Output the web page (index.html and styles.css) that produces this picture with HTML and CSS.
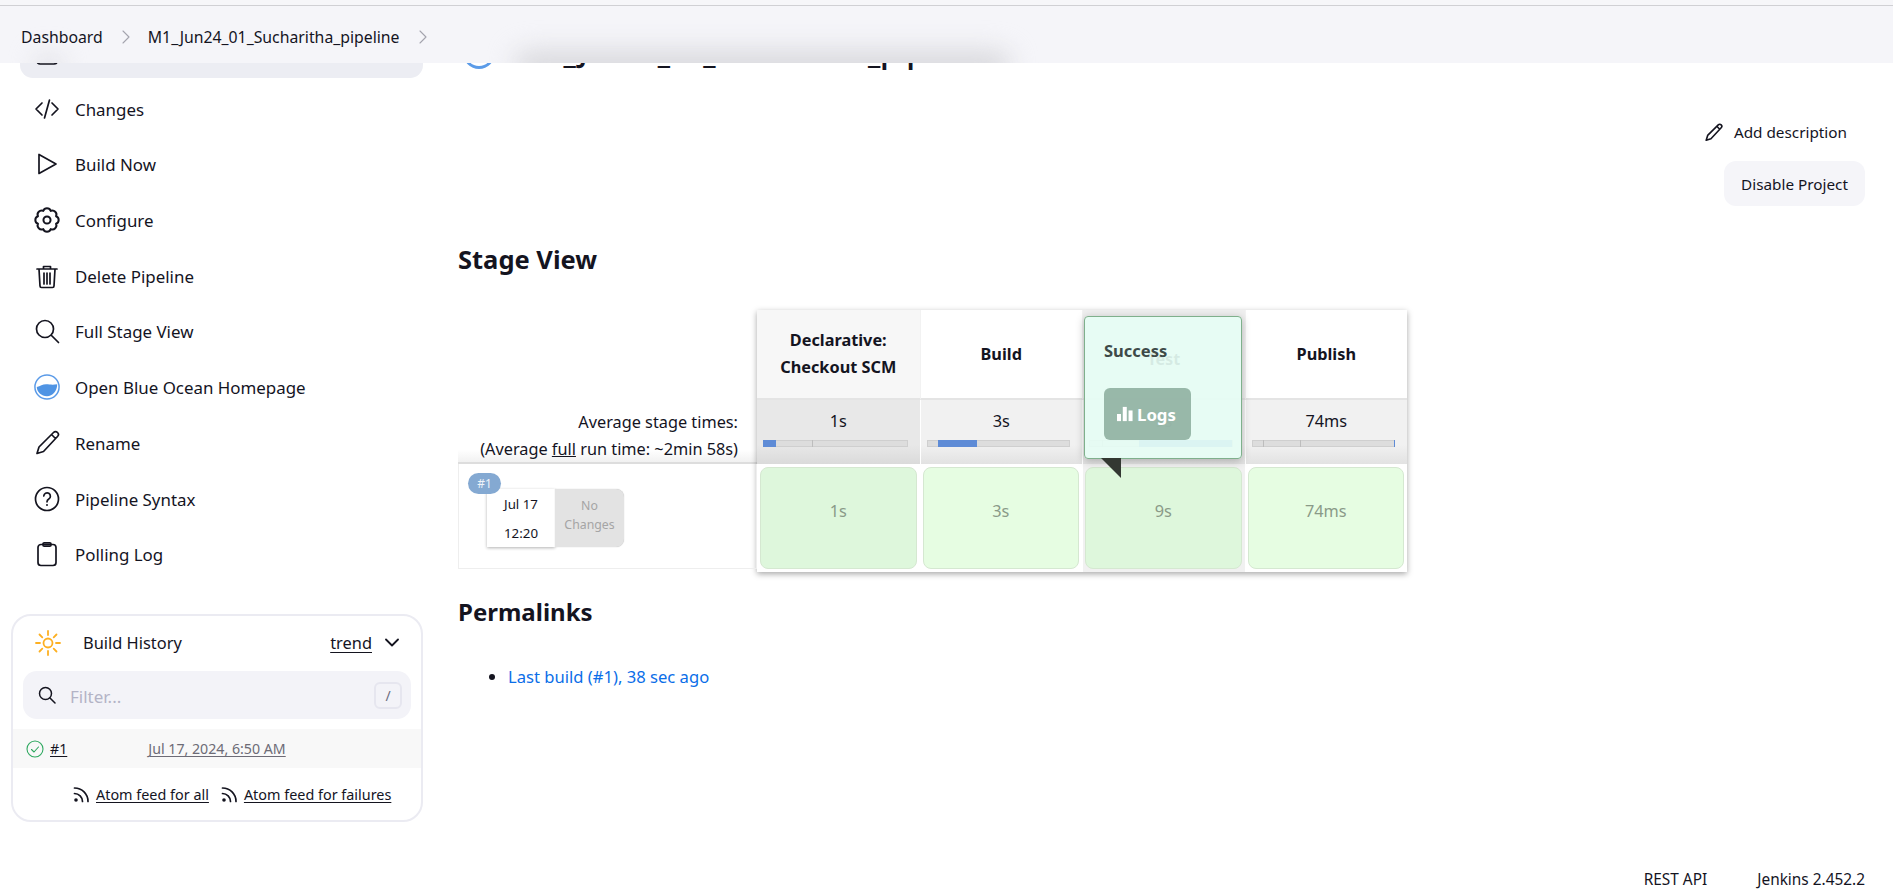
FILE: index.html
```html
<!DOCTYPE html>
<html lang="en">
  <head>
    <meta charset="UTF-8" />
    <title>M1_Jun24_01_Sucharitha_pipeline - Jenkins</title>
    <link rel="stylesheet" href="styles.css">
  </head>
  <body>
    <header class="topbar">
      <i class="smudge smudge-title"></i>
      <i class="smudge smudge-status"></i>
      <a class="crumb">Dashboard</a>
      <svg class="crumb-sep" viewBox="0 0 10 16"><path d="M2 2l6 6-6 6"/></svg>
      <a class="crumb">M1_Jun24_01_Sucharitha_pipeline</a>
      <svg class="crumb-sep" viewBox="0 0 10 16"><path d="M2 2l6 6-6 6"/></svg>
    </header>

    <div class="page">
      <aside class="sidebar">
        <ul class="tasks">
          <li class="task task-active">
            <svg class="icon" viewBox="0 0 26 26"><rect x="3" y="2" width="20" height="22" rx="3"/><path d="M8 9h10M8 14h10M8 19h6"/></svg>
            <span>Status</span>
          </li>
          <li class="task">
            <svg class="icon" viewBox="0 0 26 26"><path d="M8 7l-6 6 6 6M18 7l6 6-6 6M15.500 4l-5 18"/></svg>
            <span>Changes</span>
          </li>
          <li class="task">
            <svg class="icon" viewBox="0 0 26 26"><path d="M5 3.500v19l17-9.500z"/></svg>
            <span>Build Now</span>
          </li>
          <li class="task">
            <svg class="icon" viewBox="1 1 22 22"><path d="M19.670 8.820A3.400 3.400 0 0 1 19.670 15.180A3.400 3.400 0 0 1 15.180 19.670A3.400 3.400 0 0 1 8.820 19.670A3.400 3.400 0 0 1 4.330 15.180A3.400 3.400 0 0 1 4.330 8.820A3.400 3.400 0 0 1 8.820 4.330A3.400 3.400 0 0 1 15.180 4.330A3.400 3.400 0 0 1 19.670 8.820z"/><circle cx="12" cy="12" r="3"/></svg>
            <span>Configure</span>
          </li>
          <li class="task">
            <svg class="icon" viewBox="0 0 26 26"><path d="M3 6h20M9.500 6V3.500h7V6M5 6l1 17a1.500 1.500 0 0 0 1.500 1.500h11A1.500 1.500 0 0 0 20 23l1-17M10 10v11M13 10v11M16 10v11"/></svg>
            <span>Delete Pipeline</span>
          </li>
          <li class="task">
            <svg class="icon" viewBox="0 0 26 26"><circle cx="11" cy="11" r="8.500"/><path d="M17.500 17.500l7 7"/></svg>
            <span>Full Stage View</span>
          </li>
          <li class="task">
            <svg class="icon" viewBox="0 0 28 28"><circle class="ocean-ring" cx="14" cy="14" r="13"/><path class="ocean-water" d="M3 14c4-1 6-3 10-3 4 0 6 1 12 0 0 7-5 13-11 13C8 24 3 19 3 14z"/></svg>
            <span>Open Blue Ocean Homepage</span>
          </li>
          <li class="task">
            <svg class="icon" viewBox="0 0 26 26"><path d="M3 23.500l2-6.500L19.500 2.500a2.500 2.500 0 0 1 4 4L9.500 21.500zM17.500 4.500l4 4"/></svg>
            <span>Rename</span>
          </li>
          <li class="task">
            <svg class="icon" viewBox="0 0 26 26"><circle cx="13" cy="13" r="11.500"/><path d="M9.800 10a3.300 3.300 0 1 1 5 3c-1.200.8-1.800 1.300-1.800 2.800"/><circle class="dot" cx="13" cy="19" r="1"/></svg>
            <span>Pipeline Syntax</span>
          </li>
          <li class="task">
            <svg class="icon" viewBox="0 0 26 26"><rect x="4" y="3.500" width="18" height="21" rx="3"/><rect x="9" y="1.800" width="8" height="3.400" rx="1.200"/></svg>
            <span>Polling Log</span>
          </li>
        </ul>

        <section class="history">
          <div class="history-head">
            <svg class="sun" viewBox="0 0 26 26"><circle cx="13" cy="13" r="4.500"/><path d="M13 1v4M13 21v4M1 13h4M21 13h4M4.500 4.500l2.800 2.800M18.700 18.700l2.800 2.800M4.500 21.500l2.800-2.800M18.700 7.300l2.800-2.800"/></svg>
            <span class="history-title">Build History</span>
            <a class="trend">trend</a>
            <svg class="chevron" viewBox="0 0 14 9"><path d="M1 1.500l6 6 6-6"/></svg>
          </div>
          <div class="filter">
            <svg class="filter-icon" viewBox="0 0 18 18"><circle cx="7.500" cy="7.500" r="6"/><path d="M12 12l5 5"/></svg>
            <span class="filter-text">Filter...</span>
            <kbd class="filter-key">/</kbd>
          </div>
          <div class="build-row">
            <svg class="build-ok" viewBox="0 0 18 18"><circle cx="9" cy="9" r="8"/><path d="M5.500 9.500l2.500 2.500 4.500-5"/></svg>
            <a class="build-num">#1</a>
            <a class="build-date">Jul 17, 2024, 6:50 AM</a>
          </div>
          <div class="feeds">
            <svg class="rss" viewBox="0 0 17 17"><circle class="dot" cx="3" cy="14" r="1.800"/><path d="M1.500 7.500a8 8 0 0 1 8 8M1.500 2a13.500 13.500 0 0 1 13.500 13.500"/></svg>
            <a class="feed-link">Atom feed for all</a>
            <svg class="rss rss-second" viewBox="0 0 17 17"><circle class="dot" cx="3" cy="14" r="1.800"/><path d="M1.500 7.500a8 8 0 0 1 8 8M1.500 2a13.500 13.500 0 0 1 13.500 13.500"/></svg>
            <a class="feed-link">Atom feed for failures</a>
          </div>
        </section>
      </aside>

      <main class="main">
        <div class="title-row">
          <svg class="title-icon" viewBox="0 0 32 32"><circle cx="16" cy="16" r="14.500"/></svg>
          <h1 class="title">M1_Jun24_01_Sucharitha_pipeline</h1>
        </div>

        <div class="actions">
          <a class="add-desc">
            <svg class="add-desc-icon" viewBox="0 0 26 26"><path d="M3 23.500l2-6.500L19.500 2.500a2.500 2.500 0 0 1 4 4L9.500 21.500zM17.500 4.500l4 4"/></svg>
            Add description
          </a>
          <button class="disable-btn">Disable Project</button>
        </div>

        <h2 class="section-title stage-title">Stage View</h2>

        <div class="stage-view">
          <div class="stage-left">
            <div class="avg-label">
              <div>Average stage times:</div>
              <div>(Average <u>full</u> run time: ~2min 58s)</div>
            </div>
            <div class="run-cell">
              <span class="run-badge">#1</span>
              <div class="run-card">
                <div class="run-date"><span>Jul 17</span><span>12:20</span></div>
                <div class="run-changes">No Changes</div>
              </div>
            </div>
          </div>

          <div class="stage-grid">
            <div class="stage-head stage-head-hover">Declarative: Checkout SCM</div>
            <div class="stage-head">Build</div>
            <div class="stage-head stage-head-dim">Test
              <div class="popup">
                <div class="popup-title">Success</div>
                <a class="popup-btn">
                  <svg class="popup-bars" viewBox="0 0 18 18"><rect x="0" y="9" width="4.500" height="8"/><rect x="6.500" y="1" width="4.500" height="16"/><rect x="13" y="5" width="4.500" height="12"/></svg>
                  Logs
                </a>
              </div>
            </div>
            <div class="stage-head">Publish</div>

            <div class="stage-avg stage-avg-hover">1s
              <div class="bar"><i class="tick" style="left:34%"></i><i class="fill" style="left:0;width:9%"></i></div>
            </div>
            <div class="stage-avg">3s
              <div class="bar"><i class="fill" style="left:8%;width:27%"></i></div>
            </div>
            <div class="stage-avg">9s
              <div class="bar"><i class="tick" style="left:9%"></i><i class="fill" style="left:35%;width:65%"></i></div>
            </div>
            <div class="stage-avg">74ms
              <div class="bar"><i class="tick" style="left:8%"></i><i class="tick" style="left:34%"></i><i class="fill" style="left:99%;width:1%"></i></div>
            </div>

            <div class="stage-cell"><span class="box box-hover">1s</span></div>
            <div class="stage-cell"><span class="box">3s</span></div>
            <div class="stage-cell stage-cell-dim"><span class="box box-hover">9s</span></div>
            <div class="stage-cell"><span class="box">74ms</span></div>
          </div>
        </div>

        <h2 class="section-title perma-title">Permalinks</h2>
        <ul class="permalinks">
          <li><a>Last build (#1), 38 sec ago</a></li>
        </ul>
      </main>
    </div>

    <footer class="footer">
      <a>REST API</a>
      <a>Jenkins 2.452.2</a>
    </footer>
  </body>
</html>
```

FILE: styles.css
```css
* {
  box-sizing: border-box;
}

html,
body {
  height: 892px;
  margin: 0;
  overflow: hidden;
}

body {
  font-family: "Noto Sans", "Open Sans", sans-serif;
  font-size: 15.300px;
  color: #14141f;
  background: #fff;
}

ul {
  list-style: none;
  margin: 0;
  padding: 0;
}

svg {
  display: block;
  fill: none;
  stroke: currentColor;
  stroke-linecap: round;
  stroke-linejoin: round;
}

.dot {
  fill: currentColor;
  stroke: none;
}

/* top bar */
.topbar {
  position: absolute;
  z-index: 10;
  top: 0;
  left: 0;
  right: 0;
  height: 63px;
  display: flex;
  align-items: center;
  padding: 6px 0 0 21px;
  overflow: hidden;
  background: #f5f5f9;
  border-top: 5px solid #f6f6f9;
  box-shadow: inset 0 1px 0 #d0d0d4;
}

.smudge {
  position: absolute;
  background: #d8d8dc;
  border-radius: 14px;
  filter: blur(13px);
}

.smudge-title {
  left: 515px;
  width: 495px;
  bottom: -18px;
  height: 30px;
}

.smudge-status {
  left: 36px;
  width: 26px;
  bottom: -16px;
  height: 24px;
  background: #dcdce2;
}

.crumb {
  position: relative;
  font-size: 15.800px;
}

.crumb-sep {
  position: relative;
  width: 10px;
  height: 16px;
  margin: 0 17px 0 18px;
  stroke: #a4a4ae;
  stroke-width: 1.100;
}

/* layout */
.page {
  display: flex;
  height: 850px;
}

.sidebar {
  width: 458px;
  flex: none;
  padding-top: 28px;
}

.main {
  flex: 1;
  padding-right: 28px;
}

/* tasks */
.tasks {
  margin-left: 20px;
  width: 403px;
  display: flex;
  flex-direction: column;
  gap: 5.700px;
  font-size: 16.900px;
}

.task {
  height: 50px;
  display: flex;
  align-items: center;
  gap: 15px;
  padding-left: 14px;
  border-radius: 13px;
}

.task span {
  padding-top: 1px;
}

.task-active {
  background: #ecedf3;
}

.icon {
  width: 26px;
  height: 26px;
  flex: none;
  stroke-width: 1.700;
}

.ocean-ring {
  stroke: #5b9be8;
  stroke-width: 1.600;
}

.ocean-water {
  fill: #4f94e4;
  stroke: none;
}

/* build history */
.history {
  margin: 35px 0 0 11px;
  width: 412px;
  height: 208px;
  border: 2px solid #ebebf2;
  border-radius: 20px;
  font-size: 16.400px;
  overflow: hidden;
}

.history-head {
  height: 55px;
  display: flex;
  align-items: center;
  padding: 0 22px 2px 22px;
}

.sun {
  width: 26px;
  height: 26px;
  color: #fdb022;
  stroke-width: 1.800;
}

.history-title {
  margin-left: 22px;
  flex: 1;
}

.trend {
  text-decoration: underline;
  text-underline-offset: 3px;
}

.chevron {
  width: 14px;
  height: 9px;
  margin-left: 13px;
  stroke-width: 1.800;
}

.filter {
  margin: 0 10px;
  height: 48px;
  display: flex;
  align-items: center;
  padding: 0 9px 0 15px;
  border-radius: 14px;
  background: #f3f3f8;
}

.filter-icon {
  width: 18px;
  height: 18px;
  stroke-width: 1.500;
}

.filter-text {
  margin-left: 14px;
  padding-top: 3px;
  flex: 1;
  font-size: 17px;
  color: #b3b3c6;
}

.filter-key {
  width: 28px;
  height: 27px;
  display: flex;
  align-items: center;
  justify-content: center;
  font-family: inherit;
  font-size: 14px;
  color: #6c6c80;
  border: 2px solid #e6e6ef;
  border-radius: 6px;
}

.build-row {
  margin-top: 10px;
  height: 39px;
  display: flex;
  align-items: center;
  padding-left: 13px;
  background: #f8f8f8;
  font-size: 14.200px;
}

.build-ok {
  width: 18px;
  height: 18px;
  color: #2ea85f;
  stroke-width: 1.100;
}

.build-num {
  margin-left: 6px;
  text-decoration: underline;
  text-underline-offset: 2px;
}

.build-date {
  margin-left: 81px;
  color: #6d6b76;
  text-decoration: underline;
  text-underline-offset: 2px;
}

.feeds {
  display: flex;
  align-items: center;
  height: 50px;
  padding: 2px 0 0 60px;
  font-size: 14.400px;
}

.rss {
  width: 17px;
  height: 17px;
  margin-right: 6px;
  stroke-width: 1.700;
}

.rss-second {
  margin-left: 12px;
}

.feed-link {
  text-decoration: underline;
  text-underline-offset: 2px;
}

/* main */
.title-row {
  height: 75px;
  display: flex;
  align-items: flex-end;
  padding-left: 5px;
}

.title-icon {
  width: 32px;
  height: 32px;
  margin-bottom: 6px;
  stroke: #5b9be8;
  stroke-width: 3;
}

.title {
  margin: 0 0 5px 25px;
  font-size: 29px;
  font-weight: 600;
  line-height: 36px;
  white-space: nowrap;
}

.actions {
  display: flex;
  flex-direction: column;
  align-items: flex-end;
  margin-top: 44px;
}

.add-desc {
  height: 26px;
  display: flex;
  align-items: center;
  gap: 11px;
  margin-right: 18px;
}

.add-desc-icon {
  width: 19px;
  height: 19px;
  stroke-width: 2.200;
}

.disable-btn {
  margin-top: 16px;
  width: 141px;
  height: 45px;
  border: none;
  border-radius: 12px;
  background: #f5f5f9;
  color: inherit;
  font: inherit;
}

.section-title {
  margin: 0;
  font-size: 24px;
  font-weight: 700;
  line-height: 32px;
}

.stage-title {
  margin-top: 37px;
  font-size: 25.500px;
}

/* stage view */
.stage-view {
  display: flex;
  margin-top: 35px;
  font-size: 16.300px;
}

.stage-left {
  width: 299px;
  flex: none;
  padding-top: 90px;
}

.avg-label {
  height: 64px;
  padding: 9px 19px 0 0;
  text-align: right;
  line-height: 27px;
  background: linear-gradient(#fff 80%, #f1f1f1);
  border-bottom: 2px solid #ddd;
}

.run-cell {
  position: relative;
  height: 105px;
  padding: 25px 0 0 28px;
  border: 1px solid #eee;
  border-top: none;
}

.run-badge {
  position: absolute;
  top: 9px;
  left: 9px;
  z-index: 1;
  width: 33px;
  height: 21px;
  line-height: 21px;
  text-align: center;
  border-radius: 11px;
  background: #84a9d2;
  color: #eef3f9;
  font-size: 12px;
}

.run-card {
  display: flex;
  width: 137px;
  height: 58px;
  font-size: 13.300px;
}

.run-date {
  width: 68px;
  display: flex;
  flex-direction: column;
  justify-content: space-around;
  align-items: center;
  background: #fff;
  box-shadow: 0 1px 3px rgba(0, 0, 0, 0.3);
}

.run-changes {
  flex: 1;
  display: flex;
  align-items: center;
  text-align: center;
  font-size: 12.300px;
  line-height: 19px;
  padding: 0 4px 6px;
  background: #e3e3e3;
  color: #a5a5a5;
  border-radius: 0 8px 8px 0;
  box-shadow: 0 0 1px rgba(0, 0, 0, 0.3);
}

.stage-grid {
  display: grid;
  grid-template-columns: repeat(4, 162.500px);
  grid-template-rows: 90px 64px 108px;
  box-shadow: 0 2px 6px rgba(0, 0, 0, 0.35);
}

.stage-head {
  position: relative;
  display: flex;
  align-items: center;
  justify-content: center;
  padding: 0 20px;
  text-align: center;
  font-weight: 700;
  line-height: 27px;
  background: #fff;
  border-bottom: 2px solid #e4e4e4;
}

.stage-head + .stage-head {
  border-left: 1px solid #f2f2f2;
}

.stage-head-hover {
  background: #f7f7f7;
}

.stage-head-dim {
  background: #efefef;
  padding-top: 10px;
}

.stage-avg {
  padding-top: 8px;
  text-align: center;
  line-height: 27px;
  background: linear-gradient(#f1f1f1 70%, #e2e2e2);
  border-left: 1px solid #fff;
}

.stage-avg-hover {
  background: linear-gradient(#e8e8e8 70%, #dadada);
  border-left: none;
}

.bar {
  position: relative;
  height: 7px;
  margin: 5px 12px 0 6px;
  background: #ddd;
  box-shadow: inset 0 0 0 1px #cfcfcf;
}

.fill {
  position: absolute;
  top: 0;
  bottom: 0;
  background: #5e8bd6;
}

.tick {
  position: absolute;
  top: 0;
  bottom: 0;
  width: 1px;
  background: #bdbdbd;
}

.stage-cell {
  padding: 3px 3px 3px 2px;
  border-left: 1px solid #fff;
}

.stage-cell-dim {
  background: #f1f1f1;
}

.box {
  display: flex;
  align-items: center;
  justify-content: center;
  height: 100%;
  padding-bottom: 15px;
  border: 1px solid #d5e8d1;
  border-radius: 8px;
  background: #e6fde2;
  color: #8a9a88;
}

.box-hover {
  background: #def7dc;
}

/* popup over the third stage */
.popup {
  position: absolute;
  z-index: 5;
  top: 6px;
  left: 1px;
  width: 158px;
  height: 143px;
  padding: 23px 19px;
  text-align: left;
  background: rgba(230, 253, 244, 0.92);
  border: 1px solid #7fb08c;
  border-radius: 4px;
  box-shadow: 0 2px 8px rgba(0, 0, 0, 0.25);
}

.popup::after {
  content: "";
  position: absolute;
  top: 141px;
  left: 16px;
  border-style: solid;
  border-width: 10px;
  border-color: #333832 #333832 transparent transparent;
}

.popup-title {
  color: #3e4a48;
  font-weight: 700;
  font-size: 16.500px;
  line-height: 22px;
}

.popup-btn {
  display: flex;
  align-items: center;
  gap: 4px;
  width: 87px;
  height: 52px;
  margin-top: 26px;
  padding: 0 0 0 13px;
  border-radius: 6px;
  background: rgba(132, 166, 150, 0.8);
  color: #fff;
  font-size: 16.800px;
  font-weight: 700;
}

.popup-bars {
  width: 16px;
  height: 16px;
  fill: #fff;
  stroke: none;
}

/* permalinks */
.perma-title {
  margin-top: 24px;
}

.permalinks {
  list-style: disc;
  margin-top: 37px;
  padding-left: 50px;
  font-size: 16.600px;
  color: #14141f;
}

.permalinks a {
  color: #0b6ee8;
}

/* footer */
.footer {
  height: 42px;
  display: flex;
  justify-content: flex-end;
  gap: 50px;
  padding: 19px 28px 0 0;
  font-size: 15.400px;
}
```
